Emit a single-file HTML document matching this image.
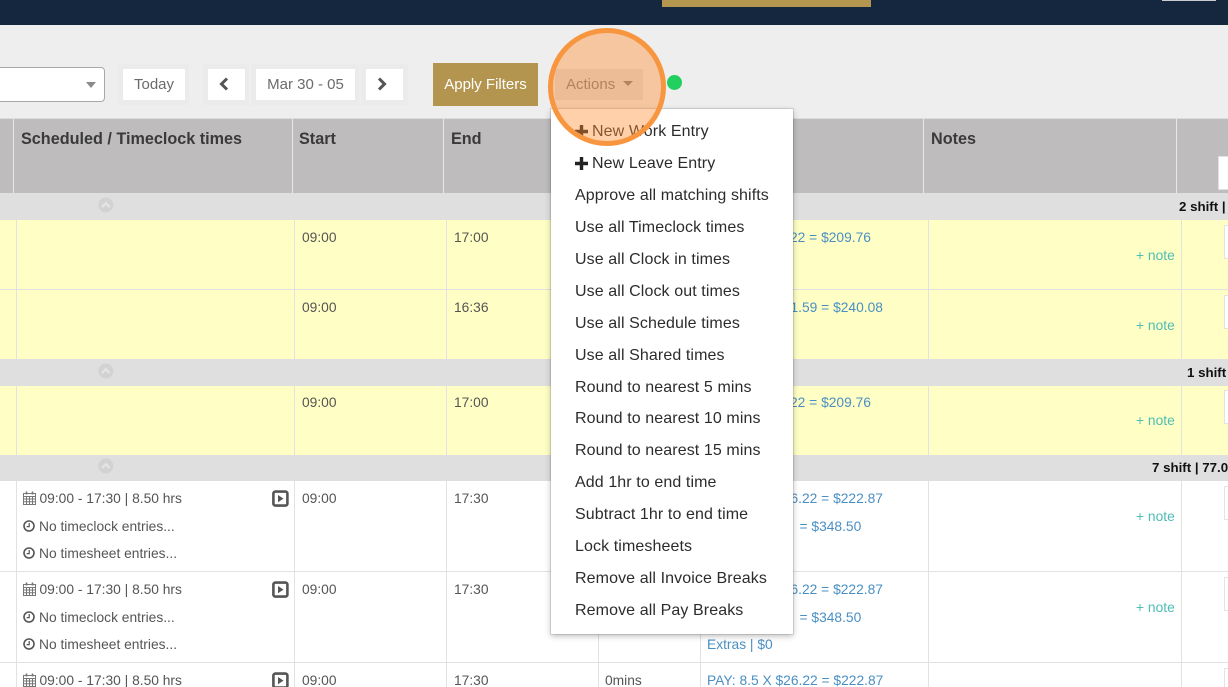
<!DOCTYPE html>
<html>
<head>
<meta charset="utf-8">
<style>
html,body{margin:0;padding:0;width:1228px;height:687px;overflow:hidden;background:#fff;font-family:"Liberation Sans",sans-serif}
#p{position:absolute;left:0;top:0;width:1228px;height:687px;overflow:hidden}
.a{position:absolute}
.t{position:absolute;white-space:nowrap;font-size:13.8px;line-height:16px;color:#555}
.h{position:absolute;white-space:nowrap;font-size:16.2px;line-height:20px;font-weight:bold;color:#3b3a3a;top:129px}
.b{position:absolute;white-space:nowrap;font-size:13.3px;line-height:16px;font-weight:bold;color:#111}
.l{position:absolute;white-space:nowrap;font-size:13.8px;line-height:16px;color:#4a8fc4}
.n{position:absolute;white-space:nowrap;font-size:13.8px;line-height:16px;color:#4dbdb5;left:1136px}
.m{position:absolute;left:575px;white-space:nowrap;font-size:16px;line-height:20px;color:#2c2c2c;letter-spacing:.1px}
.box{position:absolute;left:1224px;width:10px;height:32px;background:#fff;border:1px solid #e3e3e3}
.btn{position:absolute;background:#fff;top:69px;height:31px;text-align:center;font-size:15px;line-height:32px;color:#6b6b6b}
.wrap{position:absolute;top:64px;height:41px;background:#ebebeb}
.v{position:absolute;width:1px;background:#e2e2e2}
.r{position:absolute;left:0;width:1228px;height:1px;background:#e2e2e2}
</style>
</head>
<body>
<div id="p">
<!-- top bar -->
<div class="a" style="left:0;top:0;width:1228px;height:25px;background:#15273f"></div>
<div class="a" style="left:662px;top:0;width:209px;height:7px;background:#b5964e"></div>
<div class="a" style="left:1162px;top:0;width:54px;height:1px;background:#c8cbd0"></div>
<!-- toolbar -->
<div class="a" style="left:0;top:25px;width:1228px;height:94px;background:#eeeeef"></div>
<div class="a" style="left:-10px;top:67px;width:113px;height:33px;background:#fff;border:1px solid #a8a8a8;border-radius:4px"></div>
<div class="a" style="left:86px;top:82px;width:0;height:0;border-left:5px solid transparent;border-right:5px solid transparent;border-top:6px solid #8a8a8a"></div>
<div class="wrap" style="left:118px;width:71px"></div>
<div class="wrap" style="left:203px;width:46px"></div>
<div class="wrap" style="left:251px;width:108px"></div>
<div class="wrap" style="left:361px;width:47px"></div>
<div class="btn" style="left:123px;width:62px">Today</div>
<div class="btn" style="left:208px;width:37px"></div>
<svg class="a" style="left:218px;top:76px" width="12" height="16" viewBox="0 0 12 16"><path d="M9 2.5 L3.5 8 L9 13.5" fill="none" stroke="#555" stroke-width="3"/></svg>
<div class="btn" style="left:256px;width:99px">Mar 30 - 05</div>
<div class="btn" style="left:366px;width:37px"></div>
<svg class="a" style="left:376px;top:76px" width="12" height="16" viewBox="0 0 12 16"><path d="M3 2.5 L8.5 8 L3 13.5" fill="none" stroke="#555" stroke-width="3"/></svg>
<div class="a" style="left:433px;top:63px;width:105px;height:43px;background:#b3954f;color:#fff;text-align:center;font-size:15px;line-height:44px">Apply Filters</div>
<div class="a" style="left:555px;top:69px;width:88px;height:31px;background:#dcdcdc"></div>
<div class="t" style="left:566px;top:75px;font-size:15px;line-height:19px;color:#7b7b7b">Actions</div>
<div class="a" style="left:623px;top:81px;width:0;height:0;border-left:5px solid transparent;border-right:5px solid transparent;border-top:5px solid #7b7b7b"></div>
<div class="a" style="left:667px;top:75px;width:15px;height:15px;border-radius:50%;background:#22cf5f"></div>

<!-- header -->
<div class="a" style="left:0;top:119px;width:1228px;height:74px;background:#bebcbd;border-top:0"></div>
<div class="a" style="left:0;top:118px;width:1228px;height:1px;background:#dcdcdc"></div>
<div class="v" style="left:13px;top:119px;height:74px;background:#e8e8e8"></div>
<div class="v" style="left:292px;top:119px;height:74px;background:#e8e8e8"></div>
<div class="v" style="left:443px;top:119px;height:74px;background:#e8e8e8"></div>
<div class="v" style="left:923px;top:119px;height:74px;background:#e8e8e8"></div>
<div class="v" style="left:1176px;top:119px;height:74px;background:#e8e8e8"></div>
<div class="h" style="left:21px">Scheduled / Timeclock times</div>
<div class="h" style="left:299px">Start</div>
<div class="h" style="left:451px">End</div>
<div class="h" style="left:931px">Notes</div>
<div class="a" style="left:1218px;top:156px;width:12px;height:34px;background:#fff;border:1px solid #e0e0e0;box-sizing:border-box"></div>

<!-- group rows -->
<div class="a" style="left:0;top:193px;width:1228px;height:27px;background:#dfdfdf"></div>
<div class="a" style="left:0;top:359px;width:1228px;height:27px;background:#dfdfdf"></div>
<div class="a" style="left:0;top:455px;width:1228px;height:26px;background:#dfdfdf"></div>
<!-- yellow rows -->
<div class="a" style="left:0;top:220px;width:1228px;height:139px;background:#ffffc5"></div>
<div class="a" style="left:0;top:386px;width:1228px;height:69px;background:#ffffc5"></div>
<div class="r" style="top:289px"></div>
<div class="r" style="top:571px"></div>
<div class="r" style="top:662px"></div>

<!-- column lines -->
<div class="v" style="left:16px;top:220px;height:139px"></div>
<div class="v" style="left:294px;top:220px;height:139px"></div>
<div class="v" style="left:446px;top:220px;height:139px"></div>
<div class="v" style="left:598px;top:220px;height:139px"></div>
<div class="v" style="left:700px;top:220px;height:139px"></div>
<div class="v" style="left:928px;top:220px;height:139px"></div>
<div class="v" style="left:1181px;top:220px;height:139px"></div>
<div class="v" style="left:16px;top:386px;height:69px"></div>
<div class="v" style="left:294px;top:386px;height:69px"></div>
<div class="v" style="left:446px;top:386px;height:69px"></div>
<div class="v" style="left:598px;top:386px;height:69px"></div>
<div class="v" style="left:700px;top:386px;height:69px"></div>
<div class="v" style="left:928px;top:386px;height:69px"></div>
<div class="v" style="left:1181px;top:386px;height:69px"></div>
<div class="v" style="left:16px;top:481px;height:206px"></div>
<div class="v" style="left:294px;top:481px;height:206px"></div>
<div class="v" style="left:446px;top:481px;height:206px"></div>
<div class="v" style="left:598px;top:481px;height:206px"></div>
<div class="v" style="left:700px;top:481px;height:206px"></div>
<div class="v" style="left:928px;top:481px;height:206px"></div>
<div class="v" style="left:1181px;top:481px;height:206px"></div>

<!-- chevrons in group rows -->
<svg class="a" style="left:98px;top:197px" width="16" height="16" viewBox="0 0 16 16"><circle cx="7.8" cy="8" r="7.5" fill="#d2d2d2"/><path d="M4 10 L7.8 6.2 L11.6 10" fill="none" stroke="#e4e4e4" stroke-width="2.4"/></svg>
<svg class="a" style="left:98px;top:363px" width="16" height="16" viewBox="0 0 16 16"><circle cx="7.8" cy="8" r="7.5" fill="#d2d2d2"/><path d="M4 10 L7.8 6.2 L11.6 10" fill="none" stroke="#e4e4e4" stroke-width="2.4"/></svg>
<svg class="a" style="left:98px;top:458px" width="16" height="16" viewBox="0 0 16 16"><circle cx="7.8" cy="8" r="7.5" fill="#d2d2d2"/><path d="M4 10 L7.8 6.2 L11.6 10" fill="none" stroke="#e4e4e4" stroke-width="2.4"/></svg>

<div class="b" style="top:199px;left:1179px">2 shift |</div>
<div class="b" style="top:365px;left:1187px">1 shift</div>
<div class="b" style="top:460px;left:1152px">7 shift | 77.0</div>

<!-- yellow row text -->
<div class="t" style="left:302px;top:230px">09:00</div>
<div class="t" style="left:454px;top:230px">17:00</div>
<div class="l" style="left:790px;top:230px">22 = $209.76</div>
<div class="n" style="top:248px">+ note</div>
<div class="box" style="top:225px"></div>
<div class="t" style="left:302px;top:300px">09:00</div>
<div class="t" style="left:454px;top:300px">16:36</div>
<div class="l" style="left:790.5px;top:300px">1.59 = $240.08</div>
<div class="n" style="top:318px">+ note</div>
<div class="box" style="top:295px"></div>
<div class="t" style="left:302px;top:395px">09:00</div>
<div class="t" style="left:454px;top:395px">17:00</div>
<div class="l" style="left:790px;top:395px">22 = $209.76</div>
<div class="n" style="top:413px">+ note</div>
<div class="box" style="top:390px"></div>

<!-- white row 1 -->
<svg class="a" style="left:23px;top:491px" width="13" height="14" viewBox="0 0 13 14"><path d="M.5 2.5h12v11H.5zM.5 5.5h12M3.5 5.5v8M6.5 5.5v8M9.5 5.5v8M.5 8h12M.5 10.7h12" fill="none" stroke="#777" stroke-width="1"/><path d="M3.5 .5v3M9.5 .5v3" stroke="#777" stroke-width="1.6"/></svg>
<div class="t" style="left:39.5px;top:491px">09:00 - 17:30 | 8.50 hrs</div>
<svg class="a" style="left:23px;top:520px" width="12" height="12" viewBox="0 0 12 12"><circle cx="6" cy="6" r="5" fill="none" stroke="#555" stroke-width="1.6"/><path d="M6.2 3v3.6H3.6" fill="none" stroke="#555" stroke-width="1.2"/></svg>
<div class="t" style="left:39px;top:519px">No timeclock entries...</div>
<svg class="a" style="left:23px;top:547px" width="12" height="12" viewBox="0 0 12 12"><circle cx="6" cy="6" r="5" fill="none" stroke="#555" stroke-width="1.6"/><path d="M6.2 3v3.6H3.6" fill="none" stroke="#555" stroke-width="1.2"/></svg>
<div class="t" style="left:39px;top:546px">No timesheet entries...</div>
<svg class="a" style="left:272px;top:490px" width="17" height="17" viewBox="0 0 17 17"><rect x="1.4" y="1.6" width="14" height="14" rx="2" fill="none" stroke="#555" stroke-width="2.6"/><path d="M6 5 L11.5 8.6 L6 12.2z" fill="#555"/></svg>
<div class="t" style="left:302px;top:491px">09:00</div>
<div class="t" style="left:454px;top:491px">17:30</div>
<div class="l" style="left:790.5px;top:491px">6.22 = $222.87</div>
<div class="l" style="left:799.5px;top:519px">= $348.50</div>
<div class="n" style="top:509px">+ note</div>
<div class="box" style="top:486px"></div>

<!-- white row 2 -->
<svg class="a" style="left:23px;top:582px" width="13" height="14" viewBox="0 0 13 14"><path d="M.5 2.5h12v11H.5zM.5 5.5h12M3.5 5.5v8M6.5 5.5v8M9.5 5.5v8M.5 8h12M.5 10.7h12" fill="none" stroke="#777" stroke-width="1"/><path d="M3.5 .5v3M9.5 .5v3" stroke="#777" stroke-width="1.6"/></svg>
<div class="t" style="left:39.5px;top:582px">09:00 - 17:30 | 8.50 hrs</div>
<svg class="a" style="left:23px;top:611px" width="12" height="12" viewBox="0 0 12 12"><circle cx="6" cy="6" r="5" fill="none" stroke="#555" stroke-width="1.6"/><path d="M6.2 3v3.6H3.6" fill="none" stroke="#555" stroke-width="1.2"/></svg>
<div class="t" style="left:39px;top:610px">No timeclock entries...</div>
<svg class="a" style="left:23px;top:638px" width="12" height="12" viewBox="0 0 12 12"><circle cx="6" cy="6" r="5" fill="none" stroke="#555" stroke-width="1.6"/><path d="M6.2 3v3.6H3.6" fill="none" stroke="#555" stroke-width="1.2"/></svg>
<div class="t" style="left:39px;top:637px">No timesheet entries...</div>
<svg class="a" style="left:272px;top:581px" width="17" height="17" viewBox="0 0 17 17"><rect x="1.4" y="1.6" width="14" height="14" rx="2" fill="none" stroke="#555" stroke-width="2.6"/><path d="M6 5 L11.5 8.6 L6 12.2z" fill="#555"/></svg>
<div class="t" style="left:302px;top:582px">09:00</div>
<div class="t" style="left:454px;top:582px">17:30</div>
<div class="l" style="left:790.5px;top:582px">6.22 = $222.87</div>
<div class="l" style="left:799.5px;top:610px">= $348.50</div>
<div class="l" style="left:707px;top:637px">Extras | $0</div>
<div class="n" style="top:600px">+ note</div>
<div class="box" style="top:577px"></div>

<!-- white row 3 -->
<svg class="a" style="left:23px;top:673px" width="13" height="14" viewBox="0 0 13 14"><path d="M.5 2.5h12v11H.5zM.5 5.5h12M3.5 5.5v8M6.5 5.5v8M9.5 5.5v8M.5 8h12M.5 10.7h12" fill="none" stroke="#777" stroke-width="1"/><path d="M3.5 .5v3M9.5 .5v3" stroke="#777" stroke-width="1.6"/></svg>
<div class="t" style="left:39.5px;top:673px">09:00 - 17:30 | 8.50 hrs</div>
<svg class="a" style="left:272px;top:672px" width="17" height="17" viewBox="0 0 17 17"><rect x="1.4" y="1.6" width="14" height="14" rx="2" fill="none" stroke="#555" stroke-width="2.6"/><path d="M6 5 L11.5 8.6 L6 12.2z" fill="#555"/></svg>
<div class="t" style="left:302px;top:673px">09:00</div>
<div class="t" style="left:454px;top:673px">17:30</div>
<div class="t" style="left:605px;top:673px">0mins</div>
<div class="l" style="left:707px;top:673px">PAY: 8.5 X $26.22 = $222.87</div>
<div class="box" style="top:668px"></div>

<!-- menu -->
<div class="a" style="left:551px;top:109px;width:242px;height:525px;background:#fff;box-shadow:0 2px 6px rgba(0,0,0,.28);outline:1px solid rgba(0,0,0,.1)"></div>
<svg class="a" style="left:575px;top:125px" width="13" height="13" viewBox="0 0 13 13"><path d="M4.800 0h3.400v4.800H13v3.400H8.200V13H4.800V8.200H0V4.800h4.800z" fill="#222"/></svg>
<div class="m" style="left:592px;top:122px">New Work Entry</div>
<svg class="a" style="left:575px;top:157px" width="13" height="13" viewBox="0 0 13 13"><path d="M4.800 0h3.400v4.800H13v3.400H8.200V13H4.800V8.200H0V4.800h4.800z" fill="#222"/></svg>
<div class="m" style="left:592px;top:154px">New Leave Entry</div>
<div class="m" style="top:186px">Approve all matching shifts</div>
<div class="m" style="top:218px">Use all Timeclock times</div>
<div class="m" style="top:250px">Use all Clock in times</div>
<div class="m" style="top:282px">Use all Clock out times</div>
<div class="m" style="top:314px">Use all Schedule times</div>
<div class="m" style="top:346px">Use all Shared times</div>
<div class="m" style="top:378px">Round to nearest 5 mins</div>
<div class="m" style="top:409px">Round to nearest 10 mins</div>
<div class="m" style="top:441px">Round to nearest 15 mins</div>
<div class="m" style="top:473px">Add 1hr to end time</div>
<div class="m" style="top:505px">Subtract 1hr to end time</div>
<div class="m" style="top:537px">Lock timesheets</div>
<div class="m" style="top:569px">Remove all Invoice Breaks</div>
<div class="m" style="top:601px">Remove all Pay Breaks</div>

<!-- highlight -->
<div class="a" style="left:548px;top:28px;width:118px;height:118px;box-sizing:border-box;border-radius:50%;border:5px solid #f8953f;background:rgba(255,142,50,.42)"></div>
</div>
</body>
</html>
